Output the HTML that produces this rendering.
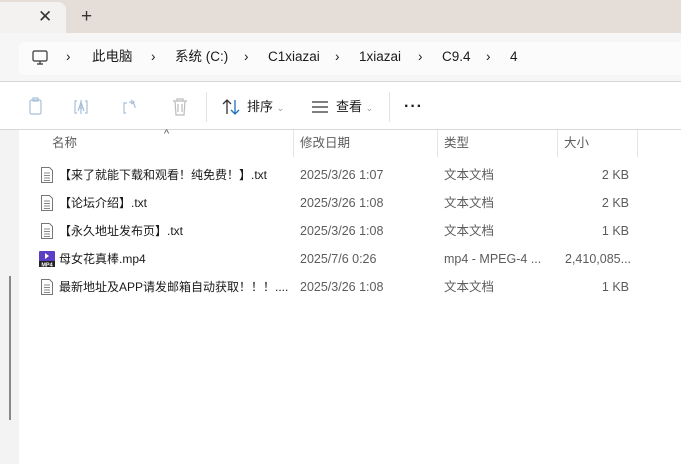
<!DOCTYPE html>
<html><head><meta charset="utf-8"><style>
*{margin:0;padding:0;box-sizing:border-box}
body{width:681px;height:464px;overflow:hidden;background:#fff;font-family:"Liberation Sans","Noto Sans CJK SC",sans-serif;font-size:12.5px;color:#1a1a1a;position:relative}
.a{position:absolute;white-space:nowrap;line-height:16px}
.g{color:#5c5c5c}
.b{font-size:13.5px;top:49px}
.n{font-size:12px}
</style></head><body>
<div class="a" style="left:0;top:0;width:681px;height:33px;background:#e5ddd7"></div>
<div class="a" style="left:0;top:2px;width:66px;height:31px;background:#f3f2f0;border-radius:0 8px 0 0"></div>
<div class="a" style="left:38px;top:9px;font-size:17px;color:#333">✕</div>
<div class="a" style="left:81px;top:9px;font-size:19px;color:#333">+</div>
<div class="a" style="left:0;top:33px;width:681px;height:49px;background:#f6f6f6;border-bottom:1px solid #d8d8d8"></div>
<div class="a" style="left:19px;top:42px;width:662px;height:33px;background:#fbfbfb;border-radius:5px 0 0 5px"></div>
<svg class="a" style="left:31px;top:48px" width="18" height="18" viewBox="0 0 18 18"><rect x="2" y="3" width="14" height="10" rx="1.5" fill="none" stroke="#333" stroke-width="1.2"/><path d="M6 16h6M9 13v3" stroke="#333" stroke-width="1.2"/></svg>
<div class="a b" style="left:66px">›</div><div class="a b" style="left:92px">此电脑</div>
<div class="a b" style="left:151px">›</div><div class="a b" style="left:175px">系统 (C:)</div>
<div class="a b" style="left:244px">›</div><div class="a b" style="left:268px">C1xiazai</div>
<div class="a b" style="left:335px">›</div><div class="a b" style="left:359px">1xiazai</div>
<div class="a b" style="left:418px">›</div><div class="a b" style="left:442px">C9.4</div>
<div class="a b" style="left:486px">›</div><div class="a b" style="left:510px">4</div>
<svg class="a" style="left:27px;top:97px" width="120" height="20" viewBox="0 0 120 20" fill="none" stroke="#a8c0d8" stroke-width="1.2"><rect x="3" y="3" width="11" height="14" rx="1.5"/><rect x="6" y="1" width="5" height="3"/><path d="M50 4h-2v12h2M58 4h2v12h-2M51 14l3-9 3 9M52 11h4M54 3v14"/><path d="M99 16h-2V6h3M102 5c4 0 6 2 6 6M104 3l3 2-3 2"/></svg>
<svg class="a" style="left:171px;top:97px" width="18" height="20" viewBox="0 0 18 20" fill="none" stroke="#bbb" stroke-width="1.2"><path d="M2 4h14M6 4V2h6v2M4 4l1 14h8l1-14M7 7v8M11 7v8"/></svg>
<div class="a" style="left:206px;top:92px;width:1px;height:30px;background:#e2e2e2"></div>
<svg class="a" style="left:222px;top:98px" width="18" height="18" viewBox="0 0 18 18" fill="none" stroke-width="1.3"><path d="M5 16V2M1 6l4-4 4 4" stroke="#333"/><path d="M13 2v14M9 12l4 4 4-4" stroke="#1a6fc0"/></svg>
<div class="a" style="left:247px;top:99px;font-size:13px">排序 <span style="color:#999;font-size:9px">⌄</span></div>
<svg class="a" style="left:311px;top:100px" width="18" height="14" viewBox="0 0 18 14" stroke="#333" stroke-width="1.2"><path d="M1 2h16M1 7h16M1 12h16"/></svg>
<div class="a" style="left:336px;top:99px;font-size:13px">查看 <span style="color:#999;font-size:9px">⌄</span></div>
<div class="a" style="left:389px;top:92px;width:1px;height:30px;background:#e2e2e2"></div>
<div class="a" style="left:404px;top:99px;font-size:16px;letter-spacing:1px;font-weight:bold">···</div>
<div class="a" style="left:0;top:129px;width:681px;height:1px;background:#d8d8d8"></div>
<div class="a" style="left:0;top:130px;width:19px;height:334px;background:#f3f3f3"></div>
<div class="a" style="left:9px;top:276px;width:2px;height:144px;background:#888"></div>
<div class="a" style="left:164px;top:126px;font-size:11px;color:#555">^</div>
<div class="a g" style="left:52px;top:135px">名称</div>
<div class="a g" style="left:300px;top:135px">修改日期</div>
<div class="a g" style="left:444px;top:135px">类型</div>
<div class="a g" style="left:564px;top:135px">大小</div>
<div class="a" style="left:293px;top:130px;width:1px;height:27px;background:#e5e5e5"></div>
<div class="a" style="left:437px;top:130px;width:1px;height:27px;background:#e5e5e5"></div>
<div class="a" style="left:557px;top:130px;width:1px;height:27px;background:#e5e5e5"></div>
<div class="a" style="left:637px;top:130px;width:1px;height:27px;background:#e5e5e5"></div>

<svg width="0" height="0" style="position:absolute"><defs><g id="t"><path d="M1.5 .5h8l3 3v12h-11z" fill="#fff" stroke="#777"/><path d="M4 6h6M4 8.5h6M4 11h6M4 13.5h6" stroke="#888"/></g></defs></svg>
<svg class="a" style="left:40px;top:167px" width="14" height="17"><use href="#t"/></svg>
<svg class="a" style="left:40px;top:195px" width="14" height="17"><use href="#t"/></svg>
<svg class="a" style="left:40px;top:223px" width="14" height="17"><use href="#t"/></svg>
<svg class="a" style="left:39px;top:251px" width="16" height="16" viewBox="0 0 16 16"><rect width="16" height="16" rx="1" fill="#5b3fc4"/><path d="M6 2l4 3-4 3z" fill="#fff"/><rect x="0" y="10" width="16" height="6" fill="#222"/><text x="8" y="15.3" font-size="5.5" fill="#fff" text-anchor="middle" font-family="Liberation Sans" font-weight="bold">MP4</text></svg>
<svg class="a" style="left:40px;top:279px" width="14" height="17"><use href="#t"/></svg>

<div class="a n" style="left:59px;top:167px">【来了就能下载和观看！纯免费！】.txt</div>
<div class="a n" style="left:59px;top:195px">【论坛介绍】.txt</div>
<div class="a n" style="left:59px;top:223px">【永久地址发布页】.txt</div>
<div class="a n" style="left:59px;top:251px">母女花真棒.mp4</div>
<div class="a n" style="left:59px;top:279px">最新地址及APP请发邮箱自动获取！！！....</div>

<div class="a g" style="left:300px;top:167px">2025/3/26 1:07</div>
<div class="a g" style="left:300px;top:195px">2025/3/26 1:08</div>
<div class="a g" style="left:300px;top:223px">2025/3/26 1:08</div>
<div class="a g" style="left:300px;top:251px">2025/7/6 0:26</div>
<div class="a g" style="left:300px;top:279px">2025/3/26 1:08</div>

<div class="a g" style="left:444px;top:167px">文本文档</div>
<div class="a g" style="left:444px;top:195px">文本文档</div>
<div class="a g" style="left:444px;top:223px">文本文档</div>
<div class="a g" style="left:444px;top:251px">mp4 - MPEG-4 ...</div>
<div class="a g" style="left:444px;top:279px">文本文档</div>

<div class="a g" style="right:52px;top:167px">2 KB</div>
<div class="a g" style="right:52px;top:195px">2 KB</div>
<div class="a g" style="right:52px;top:223px">1 KB</div>
<div class="a g" style="left:565px;top:251px">2,410,085...</div>
<div class="a g" style="right:52px;top:279px">1 KB</div>
</body></html>
